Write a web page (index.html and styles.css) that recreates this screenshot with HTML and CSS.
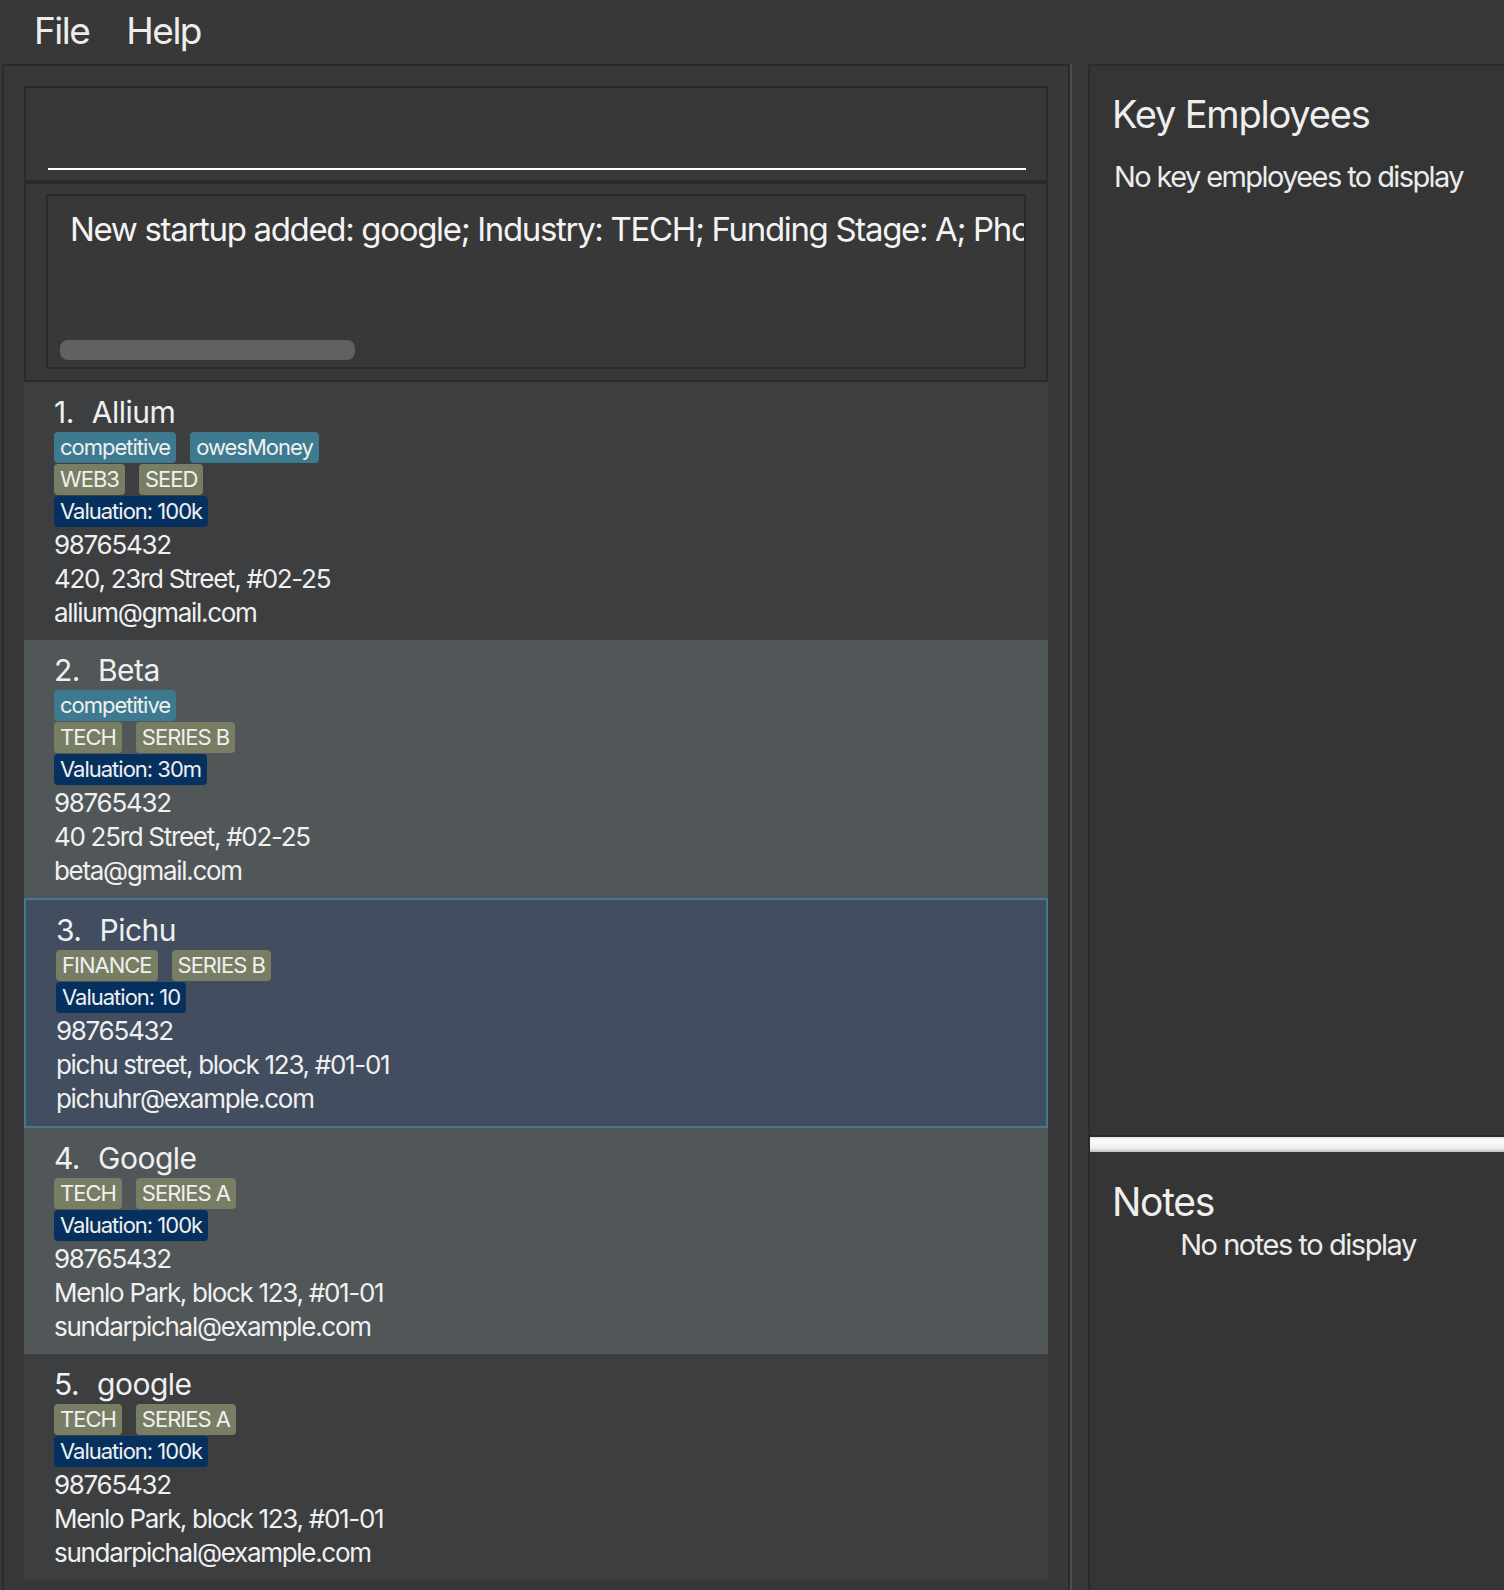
FILE: index.html
```html
<!DOCTYPE html>
<html>
<head>
<meta charset="utf-8">
<title>Startup Book</title>
<link rel="stylesheet" href="styles.css">
</head>
<body>
<div class="app">
  <div class="menubar">
    <span class="menu">File</span>
    <span class="menu">Help</span>
  </div>
  <div class="main">
    <div class="left">
      <div class="command-box">
        <div class="command-field"></div>
      </div>
      <div class="result-box">
        <div class="result-inner">
          <div class="result-text">New startup added: google; Industry: TECH; Funding Stage: A; Phone: 98765432; Email: sundarpichal@example.com; Address: Menlo Park, block 123, #01-01</div>
          <div class="scroll-thumb"></div>
        </div>
      </div>
      <div class="list">
        <div class="card card-a">
          <div class="name-row"><span class="id">1.</span><span class="name">Allium</span></div>
          <div class="tags"><span class="tag tag-teal">competitive</span><span class="tag tag-teal">owesMoney</span></div>
          <div class="tags"><span class="tag tag-olive">WEB3</span><span class="tag tag-olive">SEED</span></div>
          <div class="tags"><span class="tag tag-navy">Valuation: 100k</span></div>
          <div class="line">98765432</div>
          <div class="line">420, 23rd Street, #02-25</div>
          <div class="line">allium@gmail.com</div>
        </div>
        <div class="card card-b">
          <div class="name-row"><span class="id">2.</span><span class="name">Beta</span></div>
          <div class="tags"><span class="tag tag-teal">competitive</span></div>
          <div class="tags"><span class="tag tag-olive">TECH</span><span class="tag tag-olive">SERIES B</span></div>
          <div class="tags"><span class="tag tag-navy">Valuation: 30m</span></div>
          <div class="line">98765432</div>
          <div class="line">40 25rd Street, #02-25</div>
          <div class="line">beta@gmail.com</div>
        </div>
        <div class="card card-selected">
          <div class="name-row"><span class="id">3.</span><span class="name">Pichu</span></div>
          <div class="tags"><span class="tag tag-olive">FINANCE</span><span class="tag tag-olive">SERIES B</span></div>
          <div class="tags"><span class="tag tag-navy">Valuation: 10</span></div>
          <div class="line">98765432</div>
          <div class="line">pichu street, block 123, #01-01</div>
          <div class="line">pichuhr@example.com</div>
        </div>
        <div class="card card-b">
          <div class="name-row"><span class="id">4.</span><span class="name">Google</span></div>
          <div class="tags"><span class="tag tag-olive">TECH</span><span class="tag tag-olive">SERIES A</span></div>
          <div class="tags"><span class="tag tag-navy">Valuation: 100k</span></div>
          <div class="line">98765432</div>
          <div class="line">Menlo Park, block 123, #01-01</div>
          <div class="line">sundarpichal@example.com</div>
        </div>
        <div class="card card-a">
          <div class="name-row"><span class="id">5.</span><span class="name">google</span></div>
          <div class="tags"><span class="tag tag-olive">TECH</span><span class="tag tag-olive">SERIES A</span></div>
          <div class="tags"><span class="tag tag-navy">Valuation: 100k</span></div>
          <div class="line">98765432</div>
          <div class="line">Menlo Park, block 123, #01-01</div>
          <div class="line">sundarpichal@example.com</div>
        </div>
      </div>
    </div>
    <div class="split-line"></div>
    <div class="right">
      <div class="emp-pane">
        <h2 class="pane-title">Key Employees</h2>
        <p class="emp-empty">No key employees to display</p>
      </div>
      <div class="divider"></div>
      <div class="notes-pane">
        <h2 class="notes-title">Notes</h2>
        <p class="notes-empty">No notes to display</p>
      </div>
    </div>
  </div>
</div>
</body>
</html>
```

FILE: styles.css
```css
* {
  box-sizing: border-box;
  margin: 0;
  padding: 0;
}

html, body {
  width: 1504px;
  height: 1590px;
  overflow: hidden;
}

body {
  background: #383838;
  font-family: Inter, "Noto Sans", sans-serif;
  color: #f0f0f0;
}

.app {
  display: flex;
  flex-direction: column;
  height: 1590px;
}

/* Menu bar */
.menubar {
  height: 64px;
  flex: none;
  display: flex;
  align-items: center;
  padding-left: 34px;
  padding-bottom: 4px;
  gap: 37px;
  font-size: 37px;
  letter-spacing: -1.5px;
  color: #ededed;
}

.main {
  flex: 1;
  display: flex;
  min-height: 0;
}

/* Left side */
.left {
  margin-left: 2px;
  width: 1068px;
  flex: none;
  border: 2px solid #2b2b2b;
  border-bottom: none;
  padding: 20px 20px 0;
  display: flex;
  flex-direction: column;
  overflow: hidden;
}

.split-line {
  width: 2px;
  flex: none;
  background: #4d4d4d;
}

.command-box {
  height: 96px;
  flex: none;
  border: 2px solid #2b2b2b;
  padding: 0 20px 10px 22px;
  display: flex;
  align-items: flex-end;
}

.command-field {
  flex: 1;
  height: 48px;
  border-bottom: 2px solid #ffffff;
}

.result-box {
  height: 200px;
  flex: none;
  border: 2px solid #2b2b2b;
  padding: 10px 20px 11px;
}

.result-inner {
  height: 100%;
  border: 2px solid #2b2b2b;
  display: flex;
  flex-direction: column;
  padding: 13px 0 7px 12px;
  overflow: hidden;
}

.result-text {
  font-size: 33px;
  line-height: 40px;
  letter-spacing: -1.33px;
  white-space: nowrap;
  overflow: hidden;
  padding-left: 10px;
  color: #f4f4f4;
}

.scroll-thumb {
  margin-top: auto;
  width: 295px;
  height: 20px;
  border-radius: 8px;
  background: #616161;
}

/* Startup list */
.list {
  display: flex;
  flex-direction: column;
}

.card {
  padding: 10px 30px;
  display: flex;
  flex-direction: column;
}

.card-a {
  background: #3c3e40;
}

.card-b {
  background: #515658;
}

.card-selected {
  background: #424d5f;
  border: 2px solid #3e7b91;
}

.name-row {
  display: flex;
  height: 40px;
  font-size: 30px;
  line-height: 40px;
  letter-spacing: -0.5px;
}

.id {
  margin-right: 18px;
}

.tags {
  display: flex;
  gap: 14px;
  height: 32px;
}

.tag {
  height: 31px;
  line-height: 31px;
  padding: 0 6px;
  font-size: 22px;
  letter-spacing: -1px;
  border-radius: 4px;
  color: #f0f0f0;
}

.tag-teal {
  background: #3e7a8f;
}

.tag-olive {
  background: #787e63;
}

.tag-navy {
  background: #06315f;
}

.line {
  height: 34px;
  font-size: 26px;
  line-height: 34px;
  letter-spacing: -1.3px;
  white-space: nowrap;
}

/* Right side */
.right {
  margin-left: 16px;
  flex: 1;
  border-left: 2px solid #2b2b2b;
  border-top: 2px solid #2b2b2b;
  background: #353535;
  display: flex;
  flex-direction: column;
}

.emp-pane {
  height: 1069px;
  flex: none;
  padding: 25px 20px 0 22px;
}

.pane-title {
  font-size: 38px;
  line-height: 46px;
  font-weight: 400;
  letter-spacing: -1.2px;
  color: #efefef;
}

.emp-empty {
  margin-top: 22px;
  margin-left: 2px;
  font-size: 29px;
  line-height: 36px;
  letter-spacing: -1.6px;
  white-space: nowrap;
  color: #ececec;
}

.divider {
  height: 17px;
  flex: none;
  border-top: 2px solid #2a2a2a;
  background: linear-gradient(#e6e6e6 0%, #fbfbfb 20%, #f0f0f0 70%, #d8d8d8 88%, #bdbdbd 100%);
}

.notes-pane {
  flex: 1;
  padding: 26px 20px 0 22px;
}

.notes-title {
  font-size: 39px;
  line-height: 47px;
  font-weight: 400;
  letter-spacing: -1.3px;
  color: #efefef;
}

.notes-empty {
  margin-top: 2px;
  text-align: center;
  font-size: 29px;
  line-height: 36px;
  letter-spacing: -1.45px;
  white-space: nowrap;
  color: #ececec;
}
```
